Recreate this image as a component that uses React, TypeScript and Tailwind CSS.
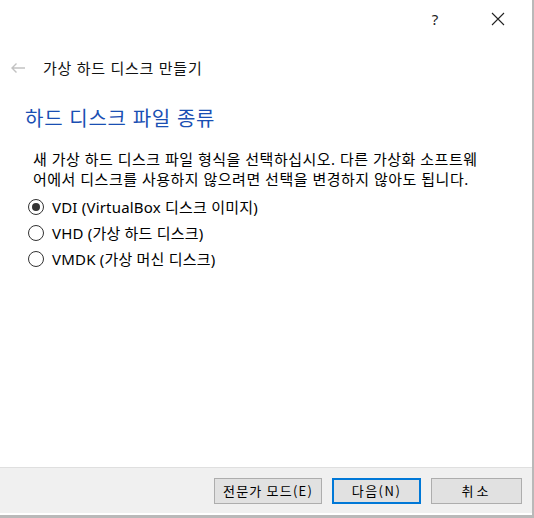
import { useState } from "react";

const kr = { fontFamily: '"Noto Sans", "Noto Sans CJK KR", sans-serif' };
const btnFont = { fontFamily: '"Noto Sans CJK KR", sans-serif' };

function Radio(props: { label: string; checked: boolean; onClick: () => void }) {
  return (
    <div className="flex items-center h-[26px] pl-[28px] cursor-default" onClick={props.onClick}>
      <span className="w-[16px] h-[16px] rounded-full border border-[#333333] bg-white flex items-center justify-center">
        {props.checked && <span className="w-[8px] h-[8px] rounded-full bg-[#333333]" />}
      </span>
      <span className="ml-[8px] text-[15px] text-black leading-none tracking-[0.2px]">{props.label}</span>
    </div>
  );
}

export default function App() {
  const [sel, setSel] = useState(0);
  const options = ["VDI (VirtualBox 디스크 이미지)", "VHD (가상 하드 디스크)", "VMDK (가상 머신 디스크)"];
  return (
    <div className="w-[534px] h-[518px] bg-[#b9b9b9] overflow-hidden" style={kr}>
      <div className="w-[532px] h-[515px] bg-white flex flex-col">
        {/* title bar */}
        <div className="h-[38px] flex items-center justify-end">
          <span className="text-[15px] text-[#222] w-[20px] text-center mr-[46px]">?</span>
          <svg width="14" height="14" viewBox="0 0 14 14" className="mr-[27px]">
            <path d="M1 1 L13 13 M13 1 L1 13" stroke="#222" strokeWidth="1.1" fill="none" />
          </svg>
        </div>

        {/* wizard header */}
        <div className="mt-[15px] h-[30px] flex items-center pl-[10px]">
          <svg width="16" height="12" viewBox="0 0 16 12">
            <path d="M15 6 H2 M6.5 1.5 L2 6 L6.5 10.5" stroke="#c2c2c2" strokeWidth="1.4" fill="none" />
          </svg>
          <span className="ml-[17px] text-[15px] text-[#111] tracking-[0.75px]">가상 하드 디스크 만들기</span>
        </div>

        <div className="mt-[22px] h-[28px] flex items-center pl-[25px] text-[20px] text-[#1a4fb3] tracking-[0.75px]">
          하드 디스크 파일 종류
        </div>

        <div className="mt-[16px] pl-[33px] pr-[20px] text-[15px] leading-[20px] text-black tracking-[0.5px] whitespace-nowrap">
          <div>새 가상 하드 디스크 파일 형식을 선택하십시오. 다른 가상화 소프트웨</div>
          <div>어에서 디스크를 사용하지 않으려면 선택을 변경하지 않아도 됩니다.</div>
        </div>

        <div className="mt-[5px] flex flex-col">
          {options.map((o, i) => (
            <Radio key={o} label={o} checked={sel === i} onClick={() => setSel(i)} />
          ))}
        </div>

        <div className="flex-1" />

        {/* footer */}
        <div className="h-[46px] border-t border-[#dfdfdf] bg-[#f0f0f0] flex items-center justify-end pr-[10px] gap-[10px]" style={btnFont}>
          <button className="w-[108px] h-[26px] bg-[#e1e1e1] border border-[#adadad] text-[13px] text-black leading-none tracking-[1.2px]">
            전문가 모드(E)
          </button>
          <button className="w-[89px] h-[26px] bg-[#e1e1e1] border-2 border-[#0078d7] text-[13px] text-black leading-none tracking-[1.5px]">
            다음(N)
          </button>
          <button className="w-[91px] h-[26px] bg-[#e1e1e1] border border-[#adadad] text-[13px] text-black leading-none tracking-[3px]">
            취소
          </button>
        </div>
        <div className="h-[2px] bg-white" />
      </div>
    </div>
  );
}
